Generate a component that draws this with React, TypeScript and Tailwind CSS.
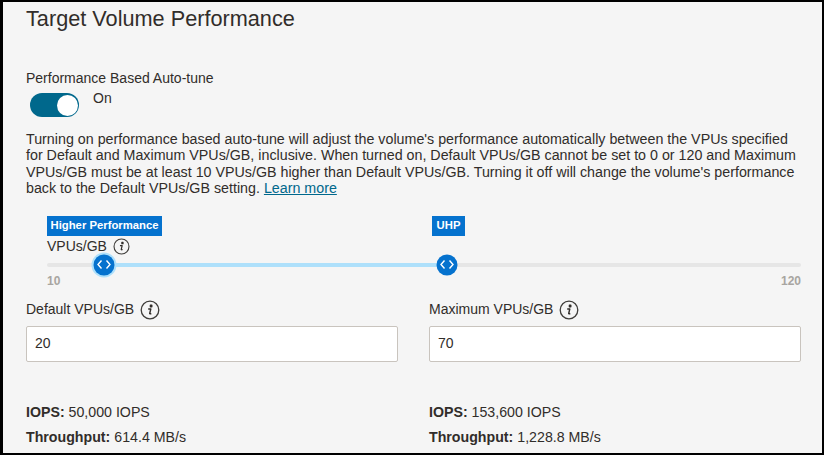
const InfoIcon = ({ size }: { size: number }) => (
  <svg width={size} height={size} viewBox="0 0 20 20" fill="none">
    <circle cx="10" cy="10" r="8.8" stroke="#3f3d3a" strokeWidth="1.3" />
    <path d="M10.4 5.2h1.4v1.5h-1.4zM8.2 9h2.6l-1.1 4.4c-.1.5.4.7 1.6.1" stroke="#312d2a" strokeWidth="1.4" strokeLinejoin="round" />
  </svg>
);

const Thumb = ({ className }: { className: string }) => (
  <div className={`absolute top-1/2 -translate-y-1/2 -translate-x-1/2 flex h-[21px] w-[21px] items-center justify-center rounded-full bg-[#0572ce] ${className}`}>
    <svg width="15" height="10" viewBox="0 0 15 10" fill="none">
      <path d="M5 1 1.5 5 5 9M10 1l3.5 4L10 9" stroke="white" strokeWidth="1.4" />
    </svg>
  </div>
);

const Field = ({ label, value }: { label: string; value: string }) => (
  <div className="flex flex-col">
    <div className="flex h-[24px] items-center gap-[6px] text-[14px] text-[#312d2a]">
      {label}
      <InfoIcon size={20} />
    </div>
    <div className="mt-[4px] flex h-[36px] items-center rounded-[2px] border border-[#c9c4be] bg-white px-[8px] text-[14px] text-[#312d2a]">
      {value}
    </div>
  </div>
);

const Stats = ({ iops, throughput }: { iops: string; throughput: string }) => (
  <div className="flex flex-col gap-[9px] text-[14.2px] leading-[16px] text-[#312d2a]">
    <div><span className="font-bold">IOPS:</span> {iops}</div>
    <div><span className="font-bold">Throughput:</span> {throughput}</div>
  </div>
);

const App = () => {
  return (
    <div className="h-[455px] w-[824px] overflow-hidden border-y-2 border-r-2 border-l-[3px] border-black bg-[#f5f5f5] pl-[23px] pr-[21px] font-['Liberation_Sans',Arial,sans-serif]">
      <h1 className="mt-[3px] text-[21.7px] leading-[28px] text-[#312d2a]">Target Volume Performance</h1>

      <div className="mt-[37px] text-[14px] leading-[16px] text-[#312d2a]">Performance Based Auto-tune</div>
      <div className="mt-[7px] ml-[4px] flex items-start gap-[14px]">
        <div className="flex h-[24px] w-[49px] items-center justify-end rounded-full bg-[#00688c] pr-[1px]">
          <div className="h-[21px] w-[21px] rounded-full bg-white" />
        </div>
        <span className="-mt-[3px] text-[14px] leading-[16px] text-[#312d2a]">On</span>
      </div>

      <p className="mt-[14px] whitespace-nowrap text-[14.27px] leading-[16.4px] text-[#312d2a]">
        Turning on performance based auto-tune will adjust the volume's performance automatically between the VPUs specified<br />
        for Default and Maximum VPUs/GB, inclusive. When turned on, Default VPUs/GB cannot be set to 0 or 120 and Maximum<br />
        VPUs/GB must be at least 10 VPUs/GB higher than Default VPUs/GB. Turning it off will change the volume's performance<br />
        back to the Default VPUs/GB setting. <a className="text-[#00688c] underline">Learn more</a>
      </p>

      <div className="mt-[19px] ml-[21px]">
        <div className="flex h-[20px]">
          <span className="flex w-[115px] items-center justify-center bg-[#0572ce] text-[11.3px] font-bold text-white">Higher Performance</span>
          <span className="ml-[270px] flex w-[33px] items-center justify-center bg-[#0572ce] text-[11.3px] font-bold text-white">UHP</span>
        </div>
        <div className="mt-[2px] flex h-[17px] items-center gap-[6px] text-[14px] text-[#312d2a]">
          VPUs/GB
          <InfoIcon size={17} />
        </div>
        <div className="relative mt-[8px] h-[4px] rounded-full bg-[#e6e6e6]">
          <div className="absolute inset-y-0 left-[57px] w-[343px] bg-[#aee0fb]" />
          <Thumb className="left-[57px] ring-[2px] ring-[#aee0fb]" />
          <Thumb className="left-[400px]" />
        </div>
        <div className="mt-[7px] flex justify-between text-[12px] leading-[14px] font-bold text-[#a8a5a1]">
          <span>10</span>
          <span>120</span>
        </div>
      </div>

      <div className="mt-[10px] grid grid-cols-[372px_372px] gap-x-[31px]">
        <Field label="Default VPUs/GB" value="20" />
        <Field label="Maximum VPUs/GB" value="70" />
      </div>

      <div className="mt-[42px] grid grid-cols-[372px_372px] gap-x-[31px]">
        <Stats iops="50,000 IOPS" throughput="614.4 MB/s" />
        <Stats iops="153,600 IOPS" throughput="1,228.8 MB/s" />
      </div>
    </div>
  );
};

export default App;
